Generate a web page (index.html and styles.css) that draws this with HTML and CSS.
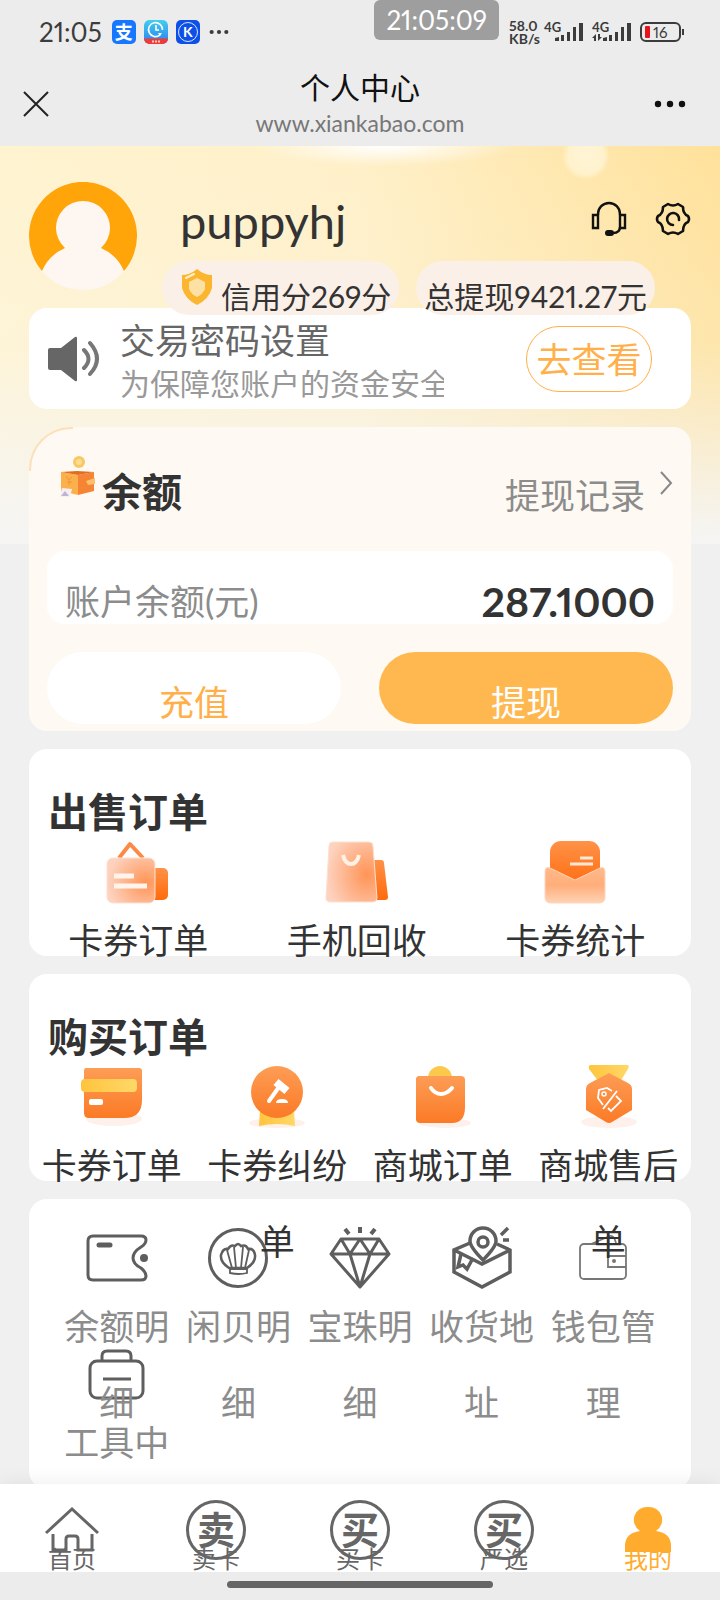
FILE: index.html
```html
<!doctype html>
<html lang="zh-CN">
<head>
	<meta charset="utf-8">
	<meta name="viewport" content="width=device-width,initial-scale=1">
	<title>个人中心</title>
	<link rel="stylesheet" href="styles.css">
</head>
<body>
<div class="screen">

<!-- 状态栏 -->
<div class="statusbar">
	<span class="time">21:05</span>
	<span class="app app-pay">支</span>
	<svg class="app" viewBox="0 0 24 24">
		<defs><linearGradient id="clk" x1="0" y1="0" x2="0" y2="1"><stop offset="0" stop-color="#42d0ee"/><stop offset="1" stop-color="#2a7df0"/></linearGradient></defs>
		<rect width="24" height="24" rx="5" fill="url(#clk)"/>
		<path d="M0 18.500h24v.5a5 5 0 0 1-5 5H5a5 5 0 0 1-5-5z" fill="#ee3b35"/>
		<path d="M16 15a7 7 0 1 1 2.500-5M12 5v5h3" fill="none" stroke="#fff" stroke-width="1.600"/>
		<path d="M14 13h4l-2 3z" fill="#fff"/>
		<path d="M8 21.500h8" stroke="#ffc9c4" stroke-width="2" stroke-dasharray="2 1"/>
	</svg>
	<span class="app app-k"><i>K</i></span>
	<svg class="more" viewBox="0 0 24 24"><g fill="#3c3c3c"><circle cx="4" cy="12" r="2.300"/><circle cx="12" cy="12" r="2.300"/><circle cx="20" cy="12" r="2.300"/></g></svg>
	<span class="toast">21:05:09</span>
	<span class="speed">58.0<br>KB/s</span>
	<span class="signal"><b>4G</b>
		<svg viewBox="0 0 40 20"><path d="M11 19v-3l4-1v4zM17 19v-6h3v6zM23 19v-9h3v9zM29 19V5h3v14zM35 19V1h4v18z" fill="#3c3c3c"/></svg>
	</span>
	<span class="signal"><b>4G</b>
		<svg viewBox="0 0 40 20"><path d="M11 19v-3l4-1v4zM17 19v-6h3v6zM23 19v-9h3v9zM29 19V5h3v14zM35 19V1h4v18zM4 19v-7l-4 4h2v3zM6 12v7l4-4H8v-3z" fill="#3c3c3c"/></svg>
	</span>
	<span class="battery"><i></i>16</span>
</div>

<!-- 浏览器标题栏 -->
<header class="titlebar">
	<button class="close" aria-label="关闭">
		<svg viewBox="0 0 26 26"><path d="M1 1l24 24M25 1L1 25" stroke="#222" stroke-width="2"/></svg>
	</button>
	<div class="heading">
		<h1>个人中心</h1>
		<p>www.xiankabao.com</p>
	</div>
	<button class="menu" aria-label="更多">
		<svg viewBox="0 0 32 8"><g fill="#111"><circle cx="4" cy="4" r="3.200"/><circle cx="16" cy="4" r="3.200"/><circle cx="28" cy="4" r="3.200"/></g></svg>
	</button>
</header>

<main class="page">
	<!-- 用户信息 -->
	<section class="profile">
		<svg class="avatar" viewBox="0 0 108 108">
			<circle cx="54" cy="54" r="54" fill="#fef6f1"/>
			<path d="M13 89A54 54 0 1 1 95 89Q88 73 72 66A27 27 0 1 0 36 66Q20 73 13 89z" fill="#ffa409"/>
		</svg>
		<div class="who">
			<div class="nameline">
				<h2>puppyhj</h2>
				<button aria-label="客服">
					<svg viewBox="0 0 36 36"><g fill="none" stroke="#111" stroke-width="2.400"><path d="M7 14V13a11 11 0 0 1 22 0v1M29 26q0 6-7 6"/><path d="M2 14h5v13H2zM29 14h5v13h-5z"/></g><rect x="14" y="29" width="9" height="6" rx="3" fill="#111"/></svg>
				</button>
				<button aria-label="设置">
					<svg viewBox="0 0 36 36"><g fill="none" stroke="#111" stroke-width="2.600" stroke-linejoin="round" stroke-linecap="round"><path d="M13 3q5 3 10 0l5 3q0 7 5 9 2 3 0 6-5 2-5 9l-5 3q-5-3-10 0l-5-3q0-7-5-9-2-3 0-6 5-2 5-9z"/><path d="M18 24a6 6 0 1 1 6-5"/></g></svg>
				</button>
			</div>
			<div class="pills">
				<span class="pill credit">
					<svg viewBox="0 0 32 36"><path d="M16 0q7 6 15 6v13q-3 11-15 17Q4 30 1 19V6q8 0 15-6z" fill="#fcb52f"/><path d="M16 9l8 4v7q-2 5-8 8-6-3-8-8v-7z" fill="#fde0a4"/><path d="M5 9l8-4" stroke="#fff0c8" stroke-width="2" stroke-linecap="round"/></svg>
					信用分269分
				</span>
				<span class="pill">总提现9421.27元</span>
			</div>
		</div>
	</section>

	<!-- 提示 -->
	<section class="notice">
		<svg viewBox="0 0 52 46"><path d="M2 12h11L27 1q2-1 2 1v42q0 2-2 1L13 34H2q-2 0-2-2V14q0-2 2-2z" fill="#666"/><path d="M36 14q9 9 0 18M42 7q14 16 0 31" fill="none" stroke="#777" stroke-width="4" stroke-linecap="round"/></svg>
		<div class="notice-text">
			<h3>交易密码设置</h3>
			<p>为保障您账户的资金安全</p>
		</div>
		<button>去查看</button>
	</section>

	<!-- 余额 -->
	<section class="balance">
		<div class="balance-head">
			<svg class="purse" viewBox="0 0 38 44">
				<circle cx="20" cy="8" r="6" fill="#f9c865"/><circle cx="20" cy="8" r="3" fill="#fbdc90"/>
				<path d="M2 18l17 3v20L2 37z" fill="#fbb04c"/><path d="M19 21l16-3v19l-16 4z" fill="#f58434"/>
				<path d="M2 18l16-1 17 1-16 3z" fill="#e06d20"/>
				<path d="M7 22l3 4 3-3M10 26v5M8 28h5" stroke="#e99a35" fill="none"/>
				<path d="M27 27l9-3v6l-7 1z" fill="#fbc06a"/>
				<path d="M3 34l10 1-2 8H1z" fill="#f6eef2"/><path d="M2 42l4-5 4 5z" fill="#bcb6d0"/>
			</svg>
			<h2>余额</h2>
			<a href="#record">提现记录</a>
			<svg class="arrow" viewBox="0 0 14 24"><path d="M2 1l10 11L2 23" fill="none" stroke="#888" stroke-width="2"/></svg>
		</div>
		<div class="account"><span>账户余额(元)</span><b>287.1000</b></div>
		<div class="actions">
			<button>充值</button>
			<button class="primary">提现</button>
		</div>
	</section>

	<svg class="defs" width="0" height="0">
		<defs>
			<linearGradient id="or" x1="0" y1="0" x2="0" y2="1"><stop offset="0" stop-color="#fd9d55"/><stop offset="1" stop-color="#fb7a26"/></linearGradient>
			<linearGradient id="deep" x1="0" y1="0" x2="0" y2="1"><stop offset="0" stop-color="#ff9248"/><stop offset="1" stop-color="#ff6a0c"/></linearGradient>
			<linearGradient id="ye" x1="0" y1="0" x2="1" y2="0"><stop offset="0" stop-color="#ffc43d"/><stop offset="1" stop-color="#ffd868"/></linearGradient>
			<radialGradient id="glass" cx=".8" cy=".55" r=".8"><stop offset="0" stop-color="#ff9456"/><stop offset="1" stop-color="#fdd3c0"/></radialGradient>
			<linearGradient id="env" x1="0" y1="0" x2="0" y2="1"><stop offset="0" stop-color="#ffb98a"/><stop offset=".5" stop-color="#ffae7a"/><stop offset="1" stop-color="#fed3b5"/></linearGradient>
		</defs>
	</svg>

	<!-- 出售订单 -->
	<section class="orders sell">
		<h2>出售订单</h2>
		<ul>
			<li><a href="#sell-card">
				<svg viewBox="0 0 64 64">
					<path d="M13 18L24 4l13 14" fill="none" stroke="#fc8a46" stroke-width="4" stroke-linejoin="round"/>
					<rect x="44" y="28" width="18" height="32" rx="5" fill="url(#deep)"/>
					<rect x="1" y="18" width="48" height="45" rx="6" fill="url(#glass)" stroke="#fde0d0"/>
					<path d="M8 36h20M8 46h33" stroke="#fff5ec" stroke-width="5"/>
				</svg><span>卡券订单</span></a></li>
			<li><a href="#sell-phone">
				<svg viewBox="0 0 64 64">
					<path d="M45 20h11q3 0 3 3l4 34q0 3-3 3H48z" fill="url(#deep)"/>
					<path d="M8 2h36q4 0 4 4l4 52q0 4-4 4H6q-5 0-5-4L4 6q0-4 4-4z" fill="url(#glass)" stroke="#fde0d0"/>
					<path d="M18 15q2 9 8 9t8-9" fill="none" stroke="#fff1e4" stroke-width="4"/>
				</svg><span>手机回收</span></a></li>
			<li><a href="#sell-stat">
				<svg viewBox="0 0 64 64">
					<rect x="7" y="1" width="50" height="48" rx="11" fill="url(#deep)"/>
					<path d="M37 18h13M27 24h23" stroke="#ffe8d6" stroke-width="3"/>
					<path d="M2 32q0-6 5-4l25 12 25-12q5-2 5 4v25q0 6-6 6H8q-6 0-6-6z" fill="url(#env)" stroke="#fdd6bd"/>
				</svg><span>卡券统计</span></a></li>
		</ul>
	</section>

	<!-- 购买订单 -->
	<section class="orders buy">
		<h2>购买订单</h2>
		<ul>
			<li><a href="#buy-card">
				<svg viewBox="0 0 64 64">
					<ellipse cx="34" cy="54" rx="28" ry="7" fill="#fef0ea"/>
					<path d="M6 3h53q3 0 3 3v29q0 18-18 18H9q-5 0-5-5V6q0-3 2-3z" fill="url(#or)"/>
					<rect x="1" y="14" width="56" height="13" rx="4" fill="url(#ye)"/>
					<rect x="9" y="34" width="14" height="6" rx="2" fill="#fff"/>
				</svg><span>卡券订单</span></a></li>
			<li><a href="#buy-dispute">
				<svg viewBox="0 0 64 64">
					<ellipse cx="32" cy="58" rx="28" ry="5" fill="#fef0ea"/>
					<path d="M15 45h34l1 16q-18-4-36 0z" fill="url(#ye)"/>
					<circle cx="32" cy="27" r="26" fill="url(#or)"/>
					<path d="M31 17l11 9" stroke="#fff" stroke-width="8"/><path d="M34 22L24 36" stroke="#fff" stroke-width="4" stroke-linecap="round"/>
					<path d="M31 38q0-4 6-4t6 4z" fill="#fff"/>
				</svg><span>卡券纠纷单</span></a></li>
			<li><a href="#mall-order">
				<svg viewBox="0 0 64 64">
					<ellipse cx="34" cy="58" rx="26" ry="5" fill="#fef0ea"/>
					<circle cx="29" cy="13" r="12" fill="#fbca4c"/>
					<path d="M7 11h43q4 0 4 4v27q0 16-13 16H9q-4 0-4-4V13z" fill="url(#or)"/>
					<path d="M20 23q4 6 10 6t11-6" fill="none" stroke="#fff" stroke-width="4" stroke-linecap="round"/>
				</svg><span>商城订单</span></a></li>
			<li><a href="#mall-service">
				<svg viewBox="0 0 64 64">
					<ellipse cx="33" cy="57" rx="28" ry="6" fill="#fef0ea"/>
					<path d="M15 0h36q3 0 1 4l-8 13H23L13 4q-1-4 2-4z" fill="url(#ye)"/>
					<path d="M33 8l19 10q4 2 4 6v21L36 57q-3 2-6 0L10 45V24q0-4 4-6z" fill="url(#or)"/>
					<path d="M41 26L27 44M36 26l-5-3-8 2-1 8 5 7M40 31l5 5-10 10-3-3" fill="none" stroke="#fff" stroke-width="1.800"/>
					<circle cx="28" cy="29" r="2" fill="none" stroke="#fff" stroke-width="1.500"/>
				</svg><span>商城售后单</span></a></li>
		</ul>
	</section>

	<!-- 工具 -->
	<section class="tools">
		<a href="#balance">
			<svg viewBox="0 0 64 64"><path d="M8 10h48q5 0 5 4t-5 7q-8 5-8 11t8 10q5 4 5 8 0 4-5 4H8q-5 0-5-5V15q0-5 5-5z" fill="none" stroke="#5e5e5e" stroke-width="3"/><path d="M14 19h11" stroke="#5e5e5e" stroke-width="5" stroke-linecap="round"/><circle cx="59" cy="32" r="4" fill="#5e5e5e"/></svg>
			<span>余额明细</span></a>
		<a href="#shell">
			<svg viewBox="0 0 64 64"><g fill="none" stroke="#5e5e5e" stroke-width="2.500"><circle cx="32" cy="32" r="28.500" stroke-width="3"/><path d="M23 42q-9-6-8-13 2-7 7-6 3-5 7-3 3-4 6 0 5-2 7 3 6-1 7 6 1 7-8 13z"/><path d="M24 43h17v4q-8 2-17 0zM26 42l-5-18M30 42l-2-21M35 42l2-21M39 42l4-18" stroke-width="1.800"/></g></svg>
			<span>闲贝明细</span></a>
		<a href="#pearl">
			<svg viewBox="0 0 64 64"><g fill="none" stroke="#5e5e5e" stroke-width="3" stroke-linejoin="round"><path d="M13 13h38l10 15-29 33L3 28zM3 28h58M13 13l9 15 10-15 10 15 9-15M22 28l10 33 10-33"/><path d="M21 8l-4-5M32 7V1M43 8l4-5" stroke-width="4"/></g></svg>
			<span>宝珠明细</span></a>
		<a href="#address">
			<svg viewBox="0 0 64 64"><g fill="none" stroke="#5e5e5e" stroke-width="3.500"><path d="M20 17L4 24v22l28 15 28-15V24l-13-6M4 24l28 14 28-14"/><path d="M33 34Q20 21 20 15a13 13 0 0 1 26 0q0 6-13 19z" fill="#fff"/><circle cx="33" cy="16" r="5"/><path d="M11 28l-3 13 5-2 4 4 6-11M51 9l7-7M53 14h6"/></g></svg>
			<span>收货地址</span></a>
		<a href="#wallet">
			<svg viewBox="0 0 64 64"><g fill="none" stroke="#777" stroke-width="1.800"><rect x="9" y="18" width="46" height="35" rx="4"/><path d="M55 30H37v11h18M20 18l19-8q4-1 6 7"/></g><circle cx="43" cy="35" r="2" fill="#777"/></svg>
			<span>钱包管理</span></a>
		<a href="#toolbox">
			<svg viewBox="0 0 64 64"><g fill="none" stroke="#5e5e5e" stroke-width="3"><rect x="5" y="19" width="53" height="37" rx="7"/><path d="M17 19v-5q0-5 5-5h19q5 0 5 5v5M18 37h28"/></g></svg>
			<span>工具中</span></a>
	</section>
</main>

<nav class="tabbar">
	<a href="#home"><svg viewBox="0 0 60 60"><g fill="none" stroke="#666" stroke-width="3"><path d="M4 33L30 9l26 24M11 34v16h13V39q0-3 3-3h6q3 0 3 3v11h14V34"/></g></svg><span>首页</span></a>
	<a href="#sell"><b>卖</b><span>卖卡</span></a>
	<a href="#buy"><b>买</b><span>买卡</span></a>
	<a href="#select"><b>买</b><span>严选</span></a>
	<a href="#mine" class="on"><svg viewBox="0 0 60 60"><path d="M30 7a13 13 0 0 1 8 24q15 2 15 15v6H7v-6q0-13 15-15A13 13 0 0 1 30 7z" fill="#ffab2e"/></svg><span>我的</span></a>
</nav>
<div class="homebar"><i></i></div>

</div>
</body>
</html>
```
FILE: styles.css
```css
* {
	box-sizing: border-box;
	margin: 0;
	padding: 0;
}
body {
	font-family: Lato, "Noto Sans CJK SC", sans-serif;
	font-variant-numeric: proportional-nums;
	color: #333;
	background-color: #f0f0f1;
}
button {
	font: inherit;
	border: none;
	background: none;
}
a {
	color: inherit;
	text-decoration: none;
}
ul {
	list-style: none;
}
svg {
	display: block;
	flex-shrink: 0;
}
.screen {
	display: flex;
	flex-direction: column;
	height: 100vh;
	overflow: hidden;
}

/* 状态栏 */
.statusbar {
	display: flex;
	position: relative;
	align-items: center;
	height: 64px;
	padding: 0 39px;
	background-color: #ececec;
	color: #3c3c3c;
}
.time {
	font-size: 26px;
	margin-right: 10px;
}
.app {
	width: 24px;
	height: 24px;
	margin-right: 8px;
	border-radius: 5px;
	color: white;
	text-align: center;
	font-size: 18px;
	font-weight: bold;
	line-height: 24px;
}
.app-pay {
	background-color: #1677ff;
}
.app-k {
	padding: 2px;
	background-color: #0d50e8;
}
.app-k i {
	display: block;
	height: 20px;
	border: 1px solid #dbe6ff;
	border-radius: 50%;
	font-size: 14px;
	font-style: normal;
	line-height: 18px;
}
.more {
	width: 22px;
	height: 22px;
	margin-right: auto;
}
.toast {
	position: absolute;
	top: 0;
	left: 52%;
	padding: 0 12px;
	border-radius: 6px;
	background-color: #9e9e9e;
	color: white;
	font-size: 26px;
	line-height: 40px;
}
.speed {
	font-size: 14px;
	font-weight: bold;
	line-height: 13px;
}
.signal {
	position: relative;
	width: 40px;
	margin-left: 4px;
}
.signal + .signal {
	margin-left: 8px;
}
.signal b {
	position: absolute;
	top: -1px;
	left: 0;
	font-size: 13px;
	line-height: 13px;
}
.signal svg {
	width: 40px;
	height: 20px;
}
.battery {
	display: flex;
	position: relative;
	align-items: center;
	width: 41px;
	height: 20px;
	margin-left: 8px;
	border: 2px solid #3c3c3c;
	border-radius: 6px;
	font-size: 15px;
}
.battery i {
	width: 5px;
	height: 12px;
	margin: 0 3px;
	border-radius: 1px;
	background-color: #e8121c;
}
.battery::after {
	content: '';
	position: absolute;
	right: -5px;
	width: 2px;
	height: 6px;
	background-color: #3c3c3c;
}

/* 标题栏 */
.titlebar {
	display: grid;
	grid-template-columns: 60px 1fr 60px;
	align-items: center;
	height: 82px;
	padding: 0 23px 2px;
	background-color: #ececec;
}
.close svg {
	width: 26px;
	height: 26px;
}
.menu svg {
	width: 32px;
	height: 8px;
	margin-left: 17px;
}
.heading {
	text-align: center;
}
.heading h1 {
	color: #111;
	font-size: 30px;
	font-weight: normal;
	line-height: 38px;
}
.heading p {
	color: #777;
	font-size: 23px;
	line-height: 34px;
}

/* 页面 */
.page {
	flex: 1;
	min-height: 0;
	overflow: hidden;
	padding: 0 29px;
	background-image:
		radial-gradient(circle at 586px 10px, #fff4d6 0, #fff2cc 18px, rgba(255,240,198,0) 24px),
		radial-gradient(ellipse 130px 20px at 385px 0, #fff 0, rgba(255,255,255,0) 100%),
		linear-gradient(to bottom, rgba(245,245,245,0) 0, rgba(246,246,244,.2) 50%, #f5f5f5 100%),
		linear-gradient(to right, #fff3d0, #fff0c8 50%, #ffe19a);
	background-repeat: no-repeat;
	background-size: 100% 398px;
}
.profile {
	display: flex;
	height: 162px;
	padding-top: 35px;
	gap: 25px;
}
.avatar {
	width: 108px;
	height: 108px;
	margin-top: 1px;
}
.who {
	flex: 1;
}
.nameline {
	display: flex;
	align-items: center;
	height: 80px;
	padding-left: 18px;
	gap: 28px;
}
.nameline h2 {
	flex: 1;
	font-size: 47px;
	font-weight: normal;
}
.nameline button svg {
	width: 36px;
	height: 36px;
}
.nameline button {
	margin-bottom: 4px;
}
.pills {
	display: flex;
	position: relative;
	z-index: 1;
	gap: 17px;
}
.pill {
	display: flex;
	height: 54px;
	padding: 18px 8px 0;
	border-radius: 27px;
	background-color: #fbf0e8;
	font-size: 30px;
	line-height: 34px;
	white-space: nowrap;
}
.credit {
	padding-left: 19px;
	gap: 8px;
}
.credit svg {
	width: 32px;
	height: 36px;
	margin-top: -10px;
}

/* 提示 */
.notice {
	display: flex;
	align-items: center;
	height: 101px;
	padding: 0 39px 0 19px;
	border-radius: 18px;
	background-color: white;
}
.notice svg {
	width: 52px;
	height: 46px;
}
.notice-text {
	flex: 1;
	margin: 0 20px;
}
.notice h3 {
	color: #666;
	font-size: 35px;
	font-weight: normal;
	line-height: 48px;
}
.notice p {
	width: 324px;
	overflow: hidden;
	color: #999;
	font-size: 30px;
	line-height: 38px;
	white-space: nowrap;
}
.notice button {
	width: 126px;
	height: 66px;
	border: 1px solid #ffb04a;
	border-radius: 33px;
	color: #ffb04a;
	font-size: 35px;
	line-height: 64px;
}

/* 余额 */
.balance {
	position: relative;
	margin-top: 18px;
	padding: 0 18px 7px;
	border-radius: 42px 18px 18px 18px;
	background-color: #fef9f2;
}
.balance::before { /* 左上角描边 */
	content: '';
	position: absolute;
	top: 0;
	left: 0;
	width: 42px;
	height: 42px;
	border: solid #fddfb8;
	border-width: 2px 0 0 2px;
	border-radius: 42px 0 0 0;
}
.balance-head {
	display: flex;
	align-items: flex-start;
	height: 124px;
	padding: 27px 0 0 12px;
}
.purse {
	width: 38px;
	height: 44px;
	margin-right: 5px;
}
.balance-head h2 {
	flex: 1;
	font-size: 40px;
	line-height: 76px;
}
.balance-head a {
	color: #8c8c8c;
	font-size: 35px;
	line-height: 82px;
}
.arrow {
	width: 14px;
	height: 24px;
	margin: 17px 0 0 14px;
}
.account {
	display: flex;
	align-items: center;
	justify-content: space-between;
	height: 73px;
	padding: 27px 18px 0;
	border-radius: 18px;
	background-color: white;
	color: #8c8c8c;
	font-size: 35px;
	line-height: 45px;
}
.account b {
	color: #333;
	font-size: 41px;
}
.actions {
	display: flex;
	margin-top: 28px;
	gap: 38px;
}
.actions button {
	flex: 1;
	height: 72px;
	padding-top: 28px;
	border-radius: 36px;
	background-color: white;
	color: #ffb04a;
	font-size: 35px;
	line-height: 44px;
}
.actions .primary {
	background-color: #ffb850;
	color: white;
}
.defs {
	position: absolute;
}

/* 订单 */
.orders {
	height: 207px;
	margin-top: 18px;
	padding-top: 35px;
	border-radius: 18px;
	background-color: white;
}
.orders h2 {
	padding-left: 19px;
	font-size: 40px;
	line-height: 56px;
}
.orders ul {
	display: flex;
}
.orders li {
	width: 25%;
}
.sell li {
	width: 33%;
}
.orders svg, .tools svg {
	width: 64px;
	height: 64px;
	margin: 0 auto -2px;
}
.orders span, .tools span {
	display: block;
	position: relative;
	z-index: 1;
	font-size: 35px;
	line-height: 76px;
	text-align: center;
}

/* 工具 */
.tools {
	display: grid;
	grid-template-columns: repeat(5, 1fr);
	grid-auto-rows: 116px;
	height: 290px;
	margin-top: 18px;
	padding: 27px 27px 0;
	border-radius: 18px;
	background-color: white;
}
.tools span {
	color: #8c8c8c;
}

/* 底部导航 */
.tabbar {
	display: flex;
	position: relative;
	z-index: 2;
	height: 88px;
	background-color: white;
	box-shadow: 0 0 20px rgba(0,0,0,.08);
	color: #666;
}
.tabbar a {
	display: flex;
	flex: 1;
	flex-direction: column;
	align-items: center;
	padding-top: 16px;
}
.tabbar svg {
	width: 60px;
	height: 60px;
}
.tabbar b {
	width: 60px;
	height: 60px;
	border: 3px solid #666;
	border-radius: 50%;
	font-size: 38px;
	line-height: 52px;
	text-align: center;
}
.tabbar span {
	margin-top: -13px;
	font-size: 24px;
	line-height: 24px;
}
.tabbar .on {
	color: #ffab2e;
}
.homebar {
	display: flex;
	position: relative;
	z-index: 2;
	justify-content: center;
	height: 28px;
	padding-top: 9px;
	background-color: #ececec;
}
.homebar i {
	width: 37%;
	height: 7px;
	border-radius: 4px;
	background-color: #666;
}
```
